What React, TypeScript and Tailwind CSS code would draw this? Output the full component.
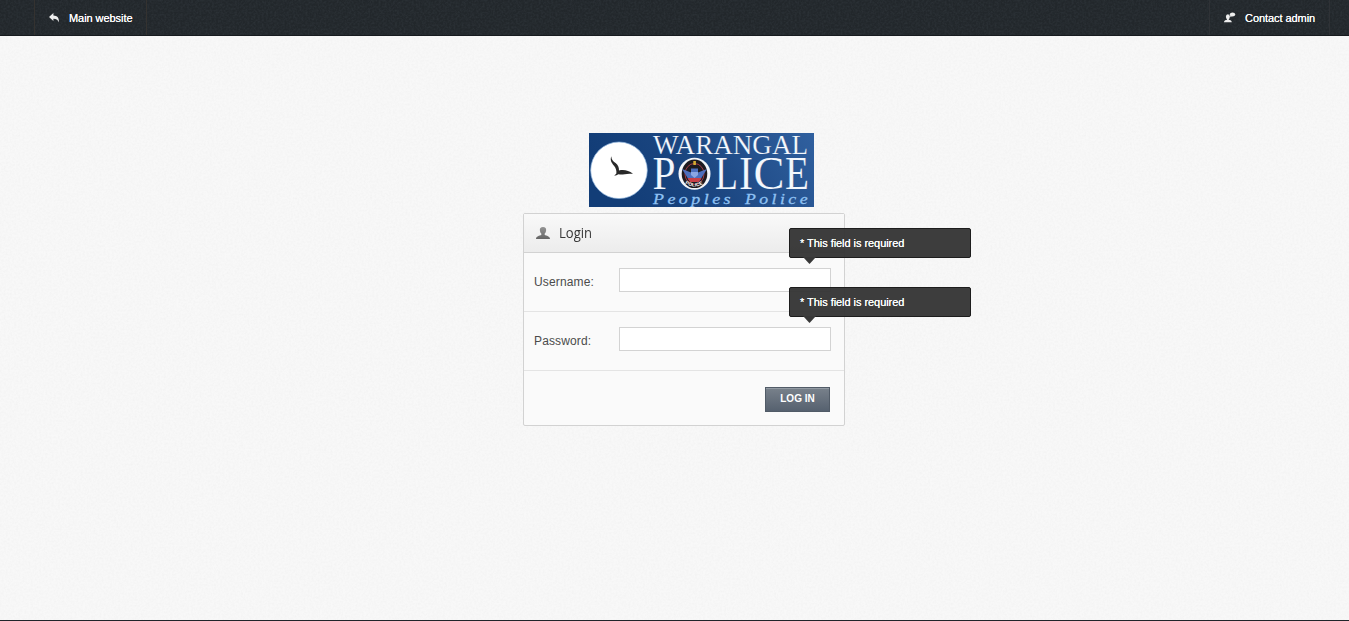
import React from "react";

function Grain({ id, className, matrix }: { id: string; className: string; matrix: string }) {
  return (
    <svg aria-hidden="true" className={`pointer-events-none absolute inset-0 h-full w-full ${className}`}>
      <filter id={id} x="0" y="0" width="100%" height="100%">
        <feTurbulence type="fractalNoise" baseFrequency="0.48" numOctaves="2" seed="4" stitchTiles="stitch" />
        <feColorMatrix values={matrix} />
      </filter>
      <rect width="100%" height="100%" filter={`url(#${id})`} />
    </svg>
  );
}

function ReplyIcon() {
  return (
    <svg width="11" height="10" viewBox="0 0 11 10" fill="#eeeeee">
      <path d="M0 4 4.4 0v2.4C8.4 2.5 10.2 4.6 9.9 9.6 9.1 6.9 7.6 5.7 4.4 5.7V8Z" />
    </svg>
  );
}

function ContactIcon() {
  return (
    <svg width="12" height="11" viewBox="0 0 12 11" fill="#eeeeee">
      <ellipse cx="3.9" cy="4.8" rx="2" ry="2.500" />
      <path d="M3 6h1.8v1.8c1.7.5 3 .8 3 2.400H0c0-1.600 1.300-1.900 3-2.400Z" />
      <ellipse cx="8.500" cy="2.400" rx="2.700" ry="2" />
      <path d="M6.600 2.800 6.200 5.300l2.200-1.600Z" />
    </svg>
  );
}

function UserIcon() {
  return (
    <svg width="14" height="12" viewBox="0 0 14 12">
      <defs>
        <linearGradient id="user" x2="0" y2="1">
          <stop stopColor="#949494" />
          <stop offset="1" stopColor="#656565" />
        </linearGradient>
      </defs>
      <path fill="url(#user)" d="M7 0c2.400 0 3.400 1.400 3.100 3.600C9.900 5.200 9.400 6 8.700 6.600v1.300C10.500 8.600 14 9 14 12H0c0-3 3.500-3.400 5.300-4.100V6.600C4.600 6 4.100 5.200 3.900 3.600 3.600 1.400 4.600 0 7 0Z" />
    </svg>
  );
}

function Logo() {
  return (
    <svg width="225" height="74" viewBox="0 0 225 74" className="block">
      <defs>
        <linearGradient id="logo" x1="0" y1="0.2" x2="1" y2="0">
          <stop stopColor="#123d77" />
          <stop offset=".45" stopColor="#1c4782" />
          <stop offset="1" stopColor="#30609f" />
        </linearGradient>
      </defs>
      <rect width="225" height="74" fill="url(#logo)" />
      <circle cx="30" cy="37.300" r="28.300" fill="#fff" stroke="#8fb4dc" strokeWidth=".7" />
      <path fill="#292929" d="M22.300 23.200c.1 3.500 1.700 4.700 4.300 6.900 2.300 2 3.600 4.400 3.400 7.300 5-1.200 9.500-.1 14 3.300-4.300-.1-7.300.5-10.200.8-1.800.1-3.100-.1-4.400-.2-1.300.9-2.300 1.200-4.200 1.400l2.200-2.300c.2-3-.4-5.200-2.400-7.700-2.400-3-4.200-5.400-2.700-9.500Z" />
      <g fill="#f4f8fd" fontFamily="'Liberation Serif', serif" stroke="#234f8b" strokeWidth=".2">
        <text x="64" y="21" fontSize="27.500" textLength="155" lengthAdjust="spacingAndGlyphs">WARANGAL</text>
        <g fontSize="46">
          <text x="63.500" y="56" textLength="23" lengthAdjust="spacingAndGlyphs">P</text>
          <text x="126" y="56" textLength="23" lengthAdjust="spacingAndGlyphs">L</text>
          <text x="150" y="56" textLength="14" lengthAdjust="spacingAndGlyphs">I</text>
          <text x="164.500" y="56" textLength="31" lengthAdjust="spacingAndGlyphs">C</text>
          <text x="196" y="56" textLength="24" lengthAdjust="spacingAndGlyphs">E</text>
        </g>
      </g>
      <circle cx="105.500" cy="40.800" r="16" fill="#f2f5fa" />
      <ellipse cx="105.500" cy="40.800" rx="12.800" ry="14.300" fill="#1d1a20" />
      <ellipse cx="105.500" cy="41" rx="9.500" ry="10.500" fill="none" stroke="#a33c48" strokeWidth="1" />
      <path fill="#4d6fbe" d="m93 36 9 3.500v-4h7v4l9-3.500-5 8-2 3.500h-11L98 44Z" />
      <path fill="#c84048" d="M98.500 45h14l-2.500 4h-9Z" />
      <path fill="#8ba6e4" d="M102 39h7v3l-3.500 3-3.500-3Z" />
      <path fill="#d7ac31" d="M104.300 28h2.600v4h-2.600Z" />
      <path id="badge" fill="none" d="M96 50.500q9.500 6 19 0" />
      <text fill="#fff" fontFamily="'Liberation Sans', sans-serif" fontSize="4.800" fontWeight="700">
        <textPath href="#badge" textLength="19">POLICE</textPath>
      </text>
      <g fill="#8fc2f4" fontFamily="'Liberation Serif', serif" fontStyle="italic" fontSize="15.500" letterSpacing="3" stroke="#8fc2f4" strokeWidth=".3">
        <text x="64" y="70.500" textLength="81" lengthAdjust="spacingAndGlyphs">Peoples</text>
        <text x="156" y="70.500" textLength="66" lengthAdjust="spacingAndGlyphs">Police</text>
      </g>
    </svg>
  );
}

function ErrorTip() {
  return (
    <div role="alert" className="absolute -top-10 left-[170px] z-10 h-[30px] w-[182px] rounded-[2px] border border-[#1d1d1d] bg-[#333333]/95 pl-2.5 text-[11px] leading-7 tracking-[-0.05px] text-white [text-shadow:0_0_0.5px_white]">
      * This field is required
      <svg width="13" height="7" viewBox="0 0 13 7" className="absolute -bottom-[7px] left-[13px]">
        <path d="M0 0h13L6.500 7Z" fill="#383838" />
      </svg>
    </div>
  );
}

function Field({ label, type }: { label: string; type: string }) {
  return (
    <label className="flex h-[59px] items-start border-b border-[#e4e4e4] pl-2.5 pt-[15px]">
      <span className="w-[85px] pt-[5px] text-[12px] leading-[18px] tracking-[0.14px] text-[#4b4b4b]">{label}</span>
      <span className="relative">
        <input type={type} className="block h-6 w-[212px] border border-[#d3d3d3] bg-white px-2 text-xs outline-none" />
        <ErrorTip />
      </span>
    </label>
  );
}

export default function App() {
  return (
    <div className="relative flex h-[621px] flex-col overflow-hidden border-b border-[#20252a] bg-[#f8f8f8] font-['Liberation_Sans',Arial,sans-serif]">
      <Grain id="paper" className="opacity-[0.06]" matrix="0 0 0 0 .45 0 0 0 0 .45 0 0 0 0 .45 2 0 0 0 -.65" />
      <header className="relative flex h-9 shrink-0 justify-between border-b border-[#171b1f] bg-[#22272b] px-[34px] pr-[19px] text-[11px] tracking-[-0.06px] text-white">
        <Grain id="cloth" className="opacity-20" matrix="0 0 0 0 .08 0 0 0 0 .1 0 0 0 0 .12 2 0 0 0 -.65" />
        <a className="relative flex w-[113px] items-center border-x border-[#343230] pl-3.5">
          <ReplyIcon />
          <span className="ml-[9px] pt-px [text-shadow:0_0_0.5px_white]">Main website</span>
        </a>
        <a className="relative flex w-[121px] items-center border-x border-[#2f3236] pl-3.5">
          <ContactIcon />
          <span className="ml-[9px] whitespace-nowrap pt-px [text-shadow:0_0_0.5px_white]">Contact admin</span>
        </a>
      </header>
      <main className="relative ml-[523px] mt-[97px] w-[322px]">
        <div className="ml-[66px] w-[225px]"><Logo /></div>
        <form className="mt-1.5 h-[213px] rounded-[2px] border border-[#d2d2d2] bg-[#fafafa]" onSubmit={(event) => event.preventDefault()}>
          <div className="flex h-[39px] items-center border-b border-[#d2d2d2] bg-linear-to-b from-[#f9f9f9] to-[#ececec] pl-3">
            <UserIcon />
            <h1 className="-mt-[3px] ml-[9px] origin-left scale-x-[0.87] font-['Open_Sans',sans-serif] text-[15px] leading-5 text-[#383838]">Login</h1>
          </div>
          <Field label="Username:" type="text" />
          <Field label="Password:" type="password" />
          <div className="flex justify-end pr-3.5 pt-4">
            <button className="h-[25px] w-[65px] border border-[#515b67] bg-linear-to-b from-[#78818b] to-[#56616f] pb-0.5 text-[10px] font-bold text-white shadow-[inset_0_1px_0_#929aa3]">LOG IN</button>
          </div>
        </form>
      </main>
    </div>
  );
}
